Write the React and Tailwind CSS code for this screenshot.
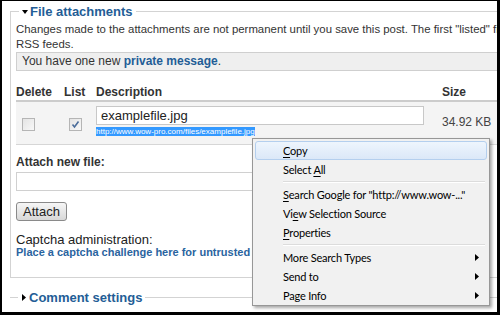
import React from "react";

const MENU = [
  { label: "Copy", key: 0, active: true },
  { label: "Select All", key: 7 },
  { sep: true },
  { label: 'Search Google for "http://www.wow-..."', key: 0 },
  { label: "View Selection Source", key: 2 },
  { label: "Properties", key: 0 },
  { sep: true },
  { label: "More Search Types", sub: true },
  { label: "Send to", sub: true },
  { label: "Page Info", sub: true },
];

const Caret = ({ open }) => (
  <svg width="6" height="7" viewBox="0 0 6 7" className="inline-block">
    {open ? <path d="M0 2 L6 2 L3 6 Z" fill="#000" /> : <path d="M1 0 L5 3.5 L1 7 Z" fill="#000" />}
  </svg>
);

const Checkbox = ({ checked }) => (
  <div className="w-[13px] h-[13px] border border-[#b5b5b5] bg-gradient-to-br from-[#e4e4e4] to-[#f8f8f8] flex items-center justify-center">
    {checked && (
      <svg width="9" height="9" viewBox="0 0 9 9">
        <path d="M1.5 4.5 L3.5 7 L7.5 1.5" stroke="#4a6c9a" strokeWidth="1.6" fill="none" />
      </svg>
    )}
  </div>
);

const Label = ({ text, k }) => {
  if (k === undefined) return text;
  return (
    <>
      {text.slice(0, k)}
      <span className="underline underline-offset-2">{text[k]}</span>
      {text.slice(k + 1)}
    </>
  );
};

const ContextMenu = () => (
  <div className="absolute left-[250px] top-[137px] w-[238px] h-[168px] bg-[#f1f1f1] border border-[#979797] shadow-[2px_2px_3px_rgba(0,0,0,0.35)] p-[2px] font-['Lato',sans-serif] text-[11px] tracking-[-0.2px] text-black">
    {MENU.map((item, i) =>
      item.sep ? (
        <div key={i} className="h-[6px] flex items-center pl-[28px] pr-[2px]">
          <div className="w-full h-[2px] border-t border-[#dcdcdc] border-b border-b-white" />
        </div>
      ) : (
        <div
          key={i}
          className={`h-[19px] flex items-center justify-between pl-[27px] pr-[7px] rounded-[3px] border ${
            item.active ? "border-[#b4cfee] bg-gradient-to-b from-[#eef5fd] to-[#dbe8f8]" : "border-transparent"
          }`}
        >
          <span className="leading-[19px] whitespace-nowrap">
            <Label text={item.label} k={item.key} />
          </span>
          {item.sub && (
            <svg width="4" height="7" viewBox="0 0 4 7">
              <path d="M0 0 L4 3.5 L0 7 Z" fill="#000" />
            </svg>
          )}
        </div>
      )
    )}
  </div>
);

export default function App() {
  return (
    <div className="relative w-[500px] h-[315px] overflow-hidden bg-white border-l-2 border-t border-r-[3px] border-b-[3px] border-black font-['Liberation_Sans',Arial,sans-serif] text-[#333]">
      <fieldset className="ml-[8px] mt-[3px] w-[520px] h-[274px] border border-[#d3d3d3] pl-[5px]">
        <legend className="ml-[3px] px-[3px] text-[13px] leading-[15px] font-bold text-[#235d96] flex items-center gap-[2px]">
          <Caret open />
          <span>File attachments</span>
        </legend>
        <p className="mt-[3px] text-[11.4px] leading-[15px] text-[#333] whitespace-nowrap">
          Changes made to the attachments are not permanent until you save this post. The first "listed" file will be included in
          <br />
          RSS feeds.
        </p>
        <div className="mt-0 h-[19px] border border-[#cfcfcf] bg-[#efefef] pl-[5px] text-[12px] leading-[17px] text-[#333]">
          You have one new <span className="font-bold text-[#235d96]">private message</span>.
        </div>

        <div className="mt-[14px] grid grid-cols-[48px_32px_346px_1fr] text-[12px] leading-[15px] font-bold text-[#333] border-b-[2px] border-[#cccccc]">
          <div>Delete</div>
          <div>List</div>
          <div>Description</div>
          <div>Size</div>
        </div>
        <div className="grid grid-cols-[48px_32px_346px_1fr] h-[43px] bg-[#f4f4f4] border-b border-[#d6d6d6]">
          <div className="pl-[6px] pt-[16px]">
            <Checkbox />
          </div>
          <div className="pl-[5px] pt-[16px]">
            <Checkbox checked />
          </div>
          <div className="pt-[4px]">
            <div className="w-[328px] h-[19px] border border-[#c8c8c8] bg-white pl-[4px] text-[13px] leading-[17px] text-[#222]">
              examplefile.jpg
            </div>
            <div className="mt-[2px] text-[8px] leading-[9px]">
              <span className="bg-[#3399ff] text-white">http://www.wow-pro.com/files/examplefile.jpg</span>
            </div>
          </div>
          <div className="pt-[13px] text-[12px] leading-[15px] text-[#444]">34.92 KB</div>
        </div>

        <div className="mt-[10px] text-[12px] leading-[15px] font-bold text-[#333]">Attach new file:</div>
        <div className="mt-[2px] w-[300px] h-[19px] border border-[#d0d0d0] bg-white" />
        <button className="mt-[11px] w-[51px] h-[19px] border border-[#8a8a8a] rounded-[3px] bg-gradient-to-b from-[#f6f6f6] to-[#d8d8d8] text-[13px] leading-[17px] text-[#222]">
          Attach
        </button>
        <div className="mt-[9px] text-[13px] leading-[15px] text-[#222]">Captcha administration:</div>
        <div className="mt-[-1px] text-[11px] leading-[13px] font-bold text-[#2a64a0]">
          Place a captcha challenge here for untrusted users.
        </div>
      </fieldset>

      <fieldset className="ml-[8px] mt-[12px] w-[520px] border-t border-[#d3d3d3] pl-[5px]">
        <legend className="ml-[3px] px-[3px] text-[13px] leading-[15px] font-bold text-[#235d96] flex items-center gap-[2px]">
          <Caret />
          <span>Comment settings</span>
        </legend>
      </fieldset>

      <ContextMenu />
    </div>
  );
}
